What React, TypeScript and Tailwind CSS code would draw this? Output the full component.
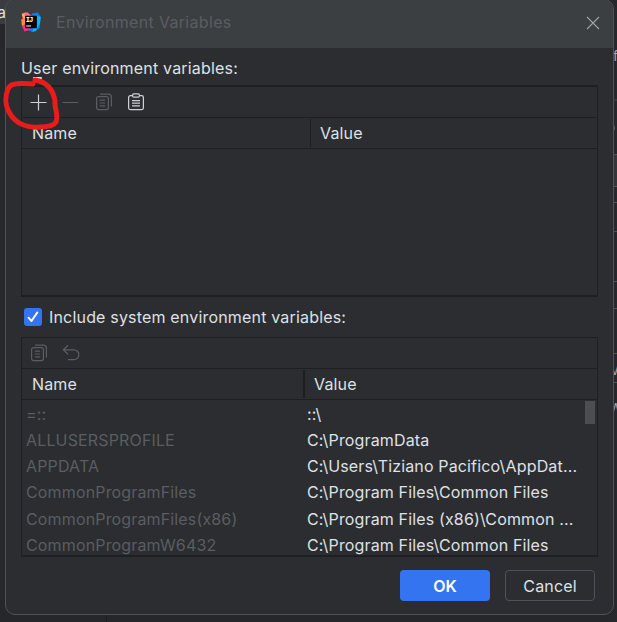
import React from "react";

const variables = [
  { name: "=::", value: "::\\" },
  { name: "ALLUSERSPROFILE", value: "C:\\ProgramData" },
  { name: "APPDATA", value: "C:\\Users\\Tiziano Pacifico\\AppDat..." },
  { name: "CommonProgramFiles", value: "C:\\Program Files\\Common Files" },
  { name: "CommonProgramFiles(x86)", value: "C:\\Program Files (x86)\\Common ..." },
  { name: "CommonProgramW6432", value: "C:\\Program Files\\Common Files" },
];

function CopyIcon() {
  return (
    <svg width="18" height="18" viewBox="0 0 18 18" fill="none" stroke="#5a5d61" strokeWidth="1.2">
      <rect x="1.6" y="3.6" width="11.8" height="13" rx="2" />
      <path d="M5 1.2h8.5A3 3 0 0 1 16.4 4v9.5M4.8 7.2h5.4M4.8 10h5.4M4.8 12.8h5.4" />
    </svg>
  );
}

function PasteIcon() {
  return (
    <svg width="18" height="18" viewBox="0 0 18 18" fill="none" stroke="#ced0d6" strokeWidth="1.25">
      <path d="M5.5 2.6H3.4A1.8 1.8 0 0 0 1.6 4.4v10.4a1.8 1.8 0 0 0 1.8 1.8h11.2a1.8 1.8 0 0 0 1.8-1.8V4.4a1.8 1.8 0 0 0-1.8-1.8h-2.1" />
      <rect x="5.6" y="0.8" width="6.8" height="3.4" rx="1.2" />
      <path d="M5 7.5h8M5 10.2h8M5 12.8h8" />
    </svg>
  );
}

function LogoIcon() {
  return (
    <svg width="20" height="20" viewBox="0 0 20 20">
      <path d="M11 1.5 16.8.6 19.8 5l-1.2 11.3-7 3.6-5-2z" fill="#087cfa" />
      <path d="m14 3 5.6 2-.6 6-4 8-3.4.8z" fill="#07b8f0" />
      <path d="M1 .9 6.5.3 11 4.2 5 13 1.4 9z" fill="#fe315d" />
      <path d="M.6 2.2 5 .4 9 4 3 8z" fill="#f5b34b" />
      <path d="m3.5 1.8 3-1.4L12 5 4 6z" fill="#fb6d9b" />
      <path d="m.2 7.4 4-1.4v11.5L.8 13z" fill="#fc8c35" />
      <path d="m1 14.3 4-3 5.2 6-6.6 2.3z" fill="#ff2d83" />
      <path d="M4.1 3.7h11.8v12.6H4.1z" fill="#080407" />
      <text x="4.8" y="10" fill="#fff" fontFamily="Liberation Mono, monospace" fontWeight="700" fontSize="7.2" textLength="7.5">IJ</text>
      <path d="M5.2 14h4.8" stroke="#fff" strokeWidth="1" />
    </svg>
  );
}

function TableHeader({ first }: { first?: boolean }) {
  return (
    <div className="flex h-[31px] shrink-0 items-center border-b border-[#1e1f22] text-[16px] tracking-[0.15px]">
      <div className={first ? "w-[288px] pl-[10px]" : "w-[281px] pl-[10px]"}>Name</div>
      <div className={first ? "h-7 w-px bg-[#1e1f22]" : "h-7 w-0.5 bg-[#1e1f22]"} />
      <div className="pl-[9px]">Value</div>
    </div>
  );
}

export default function App() {
  return (
    <div className="relative h-[622px] w-[617px] overflow-hidden bg-[#26272a] font-['Inter',sans-serif] text-[16px] text-[#dfe1e5]">
      <div className="absolute left-0 top-0 h-6 w-5 bg-[#3b3c40]" />
      <span className="absolute -left-[3px] top-0 text-[16px] leading-[24px]">a</span>
      <div className="absolute bottom-0 left-[106px] h-2 w-px bg-[#1b1c1e]" />
      <div className="absolute right-0 top-0 h-[622px] w-2.5 overflow-hidden bg-[#27282b] text-[14px] leading-4">
        <span className="absolute left-[6px] top-[48px] text-[#aaa5a0]">f</span>
        <span className="absolute left-0 top-[68px] text-[#878b92]">s</span>
        <span className="absolute left-0 top-[119px] text-[#3574f0]">o</span>
        <div className="absolute top-[99px] h-0.5 w-full bg-[#36373a]" />
        <div className="absolute top-[154px] h-[33px] w-full border-y border-[#535559] bg-[#35363a]" />
        <div className="absolute top-[202px] h-[30px] w-full border-y border-[#4e5157]" />
        <div className="absolute top-[281px] h-7 w-full border-y border-[#4e5157]" />
        <div className="absolute top-[353px] h-[30px] w-full border-y border-[#4e5157]" />
        <span className="absolute left-[3px] top-[362px] text-[#a0a3a8]">V</span>
        <span className="absolute left-[3px] top-[398px] text-[#a0a3a8]">w</span>
      </div>

      <div className="relative -mt-px ml-[5px] flex h-[616px] w-[609px] flex-col overflow-hidden rounded-[10px] border border-[#505255] bg-[#2b2d30]">
        <header className="flex h-12 shrink-0 items-center bg-[#3c3f41] pl-[15px] pr-[13px]">
          <div className="mt-[-4px]"><LogoIcon /></div>
          <h1 className="ml-[15px] mt-[-4px] flex-1 text-[16px] font-normal tracking-[0.32px] text-[#5a5d61]">Environment Variables</h1>
          <svg className="mt-[-2px]" width="14" height="14" viewBox="0 0 14 14" stroke="#a0a1a3" strokeWidth="1.1">
            <path d="m1 1 12 12M13 1 1 13" />
          </svg>
        </header>
        <main className="flex flex-1 flex-col pl-[15px] pr-[15px]">
          <div className="flex h-[37px] items-center pt-[3px] tracking-[0.18px]">
            <span>U<span className="underline decoration-[1.5px] underline-offset-[3px]">s</span>er environment variables:</span>
          </div>
          <section className="flex h-[212px] flex-col border-x border-y-2 border-[#1e1f22]">
            <div className="flex h-[31px] shrink-0 items-center border-b border-[#1e1f22] pl-2">
              <svg width="17" height="17" viewBox="0 0 17 17" stroke="#ced0d6" strokeWidth="1.2">
                <path d="M8.5.5v16M.5 8.5h16" />
              </svg>
              <svg className="ml-[15px]" width="17" height="17" viewBox="0 0 17 17" stroke="#5a5d61" strokeWidth="1.2">
                <path d="M.5 8.5h16" />
              </svg>
              <div className="ml-4"><CopyIcon /></div>
              <div className="ml-[14px]"><PasteIcon /></div>
            </div>
            <TableHeader first />
          </section>
          <label className="flex h-10 shrink-0 items-center pl-[3px] tracking-[0.18px]">
            <span className="flex h-[18px] w-[18px] items-center justify-center rounded-[3px] bg-[#3574f0]">
              <svg width="12" height="12" viewBox="0 0 12 12" fill="none" stroke="white" strokeWidth="2" strokeLinecap="round" strokeLinejoin="round">
                <path d="m1.5 6.7 3 3.3 5.8-8.5" />
              </svg>
            </span>
            <span className="ml-[7px]">Include system environment variables:</span>
          </label>
          <section className="flex h-[220px] flex-col overflow-hidden border-x border-b-2 border-t border-[#1e1f22]">
            <div className="flex h-[31px] shrink-0 items-center border-b border-[#1e1f22] pl-2">
              <CopyIcon />
              <svg className="ml-[14px]" width="18" height="18" viewBox="0 0 18 18" fill="none" stroke="#5a5d61" strokeWidth="1.25">
                <path d="M6 1.3 1.3 5.8 6 10.3M1.5 5.8H12a4.8 4.8 0 0 1 0 9.8H6" />
              </svg>
            </div>
            <TableHeader />
            <div className="flex min-h-0 flex-1">
              <div className="flex-1 overflow-hidden">
                {variables.map((item) => (
                  <div key={item.name} className="flex h-[26.25px] items-center whitespace-nowrap pt-px">
                    <span className="w-[281px] pl-1 tracking-[0.15px] text-[#5a5d61]">{item.name}</span>
                    <span className="pl-1 tracking-[0.15px]">{item.value}</span>
                  </div>
                ))}
              </div>
              <div className="mr-0.5 mt-px h-[23px] w-2.5 bg-[#4d4e51]" />
            </div>
          </section>
          <footer className="mt-[13px] flex justify-end gap-[15px] pr-[3px]">
            <button className="h-[31px] w-[90px] rounded-[4px] bg-[#3574f0] font-semibold text-white">OK</button>
            <button className="h-[31px] w-[90px] rounded-[4px] border border-[#4e5157] tracking-[0.15px]">Cancel</button>
          </footer>
        </main>
      </div>
      <svg className="absolute left-0 top-[74px]" width="65" height="60" viewBox="0 0 65 60" fill="none" stroke="#e91c1c" strokeWidth="5" strokeLinecap="round" strokeLinejoin="round">
        <path d="M33 10 22 9.5Q10 9 8 15C5 22 5 31 9 38C16 51 29 54 40 53Q53 53 56 48C59 41 54 34 55 27C53 15 47 8 35 6" />
      </svg>
    </div>
  );
}
